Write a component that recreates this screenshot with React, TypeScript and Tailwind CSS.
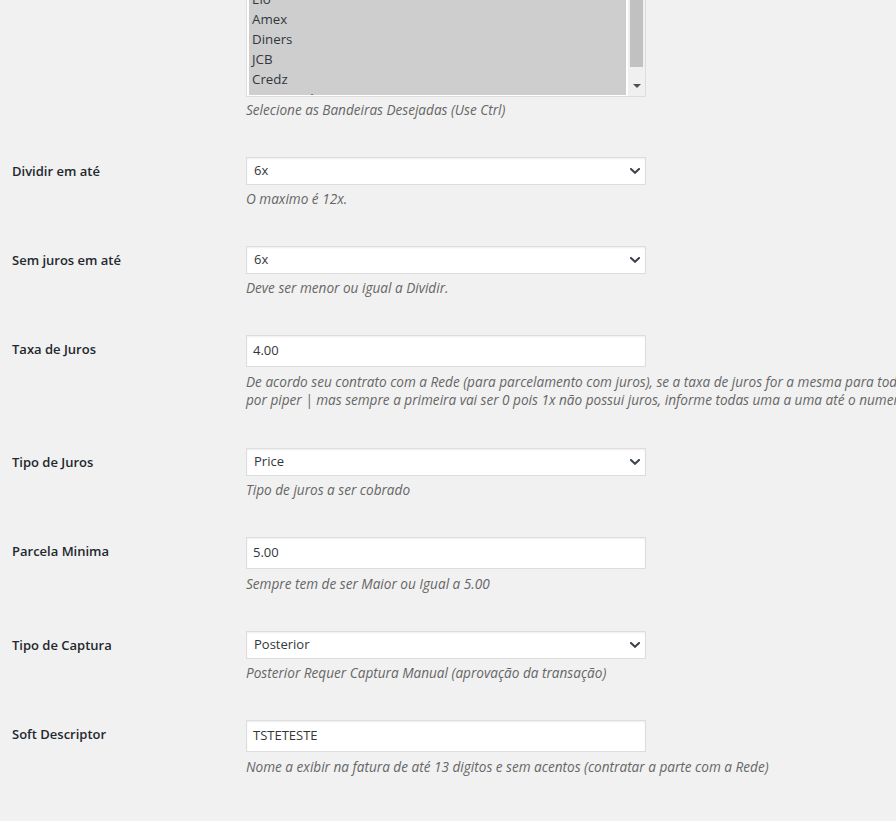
import React from "react";

const font = { fontFamily: "'Segoe UI', 'Open Sans', 'Noto Sans', sans-serif" };

function Chevron() {
  return (
    <svg viewBox="0 0 10 6" className="w-[10px] h-[6px] shrink-0" fill="none">
      <polyline
        points="1,1 5,4.8 9,1"
        stroke="#3c434a"
        strokeWidth="2"
        strokeLinecap="square"
      />
    </svg>
  );
}

function SelectBox({ value }: { value: string }) {
  return (
    <div className="w-[400px] h-[28px] flex items-center justify-between pl-[7px] pr-[5px] bg-white border border-[#dddddd] shadow-[inset_0_1px_2px_rgba(0,0,0,0.07)] text-[13px] text-[#32373c]">
      <span>{value}</span>
      <Chevron />
    </div>
  );
}

function TextBox({ value }: { value: string }) {
  return (
    <div className="w-[400px] h-[32px] flex items-center pl-[6px] bg-white border border-[#dddddd] shadow-[inset_0_1px_2px_rgba(0,0,0,0.07)] text-[13px] text-[#32373c]">
      {value}
    </div>
  );
}

function Desc({ children, gap }: { children: React.ReactNode; gap: string }) {
  return (
    <p className={`${gap} text-[13.6px] leading-[18px] italic text-[#666666] whitespace-nowrap`}>
      {children}
    </p>
  );
}

function Row({
  label,
  children,
  pb = "pb-[38px]",
}: {
  label: string;
  children: React.ReactNode;
  pb?: string;
}) {
  return (
    <div className={`flex ${pb}`}>
      <div className="w-[246px] shrink-0 pl-[12px] pt-[5px] text-[13px] leading-[18px] font-semibold text-[#23282d]">
        {label}
      </div>
      <div className="flex flex-col">{children}</div>
    </div>
  );
}

const bandeiras = ["Elo", "Amex", "Diners", "JCB", "Credz", "Hipercard"];

export default function App() {
  return (
    <div
      className="w-[896px] h-[821px] overflow-hidden bg-[#f1f1f1]"
      style={font}
    >
      {/* BANDEIRAS */}
      <div className="flex pb-[38px]">
        <div className="w-[246px] shrink-0" />
        <div className="flex flex-col">
          <div className="w-[400px] h-[97px] flex bg-white border-x border-b border-[#dddddd] pl-[2px] overflow-hidden">
            <div className="flex-1 h-[95px] overflow-hidden bg-[#cecece]">
              <div className="-mt-[11px]">
                {bandeiras.map((b) => (
                  <div
                    key={b}
                    className="h-[20px] leading-[20px] pl-[3px] text-[13.3px] text-[#32373c]"
                  >
                    {b}
                  </div>
                ))}
              </div>
            </div>
            <div className="w-[2px]" />
            <div className="w-[17px] h-[96px] bg-[#f0f0f0] flex flex-col items-center">
              <div className="w-[13px] h-[67px] bg-[#c1c1c1]" />
              <div className="flex-1 flex items-center justify-center pt-[8px]">
                <div className="w-0 h-0 border-l-[4px] border-r-[4px] border-t-[4px] border-l-transparent border-r-transparent border-t-[#505050]" />
              </div>
            </div>
          </div>
          <Desc gap="mt-[4px]">Selecione as Bandeiras Desejadas (Use Ctrl)</Desc>
        </div>
      </div>

      <Row label="Dividir em até">
        <SelectBox value="6x" />
        <Desc gap="mt-[5px]">O maximo é 12x.</Desc>
      </Row>

      <Row label="Sem juros em até">
        <SelectBox value="6x" />
        <Desc gap="mt-[5px]">Deve ser menor ou igual a Dividir.</Desc>
      </Row>

      <Row label="Taxa de Juros" pb="pb-[39px]">
        <TextBox value="4.00" />
        <Desc gap="mt-[6px]">
          De acordo seu contrato com a Rede (para parcelamento com juros), se a taxa de juros for a mesma para todas as parcelas informe apenas uma
        </Desc>
        <Desc gap="mt-0">
          por piper | mas sempre a primeira vai ser 0 pois 1x não possui juros, informe todas uma a uma até o numero de parcelas
        </Desc>
      </Row>

      <Row label="Tipo de Juros">
        <SelectBox value="Price" />
        <Desc gap="mt-[5px]">Tipo de juros a ser cobrado</Desc>
      </Row>

      <Row label="Parcela Minima">
        <TextBox value="5.00" />
        <Desc gap="mt-[6px]">Sempre tem de ser Maior ou Igual a 5.00</Desc>
      </Row>

      <Row label="Tipo de Captura">
        <SelectBox value="Posterior" />
        <Desc gap="mt-[5px]">Posterior Requer Captura Manual (aprovação da transação)</Desc>
      </Row>

      <Row label="Soft Descriptor">
        <TextBox value="TSTETESTE" />
        <Desc gap="mt-[6px]">
          Nome a exibir na fatura de até 13 digitos e sem acentos (contratar a parte com a Rede)
        </Desc>
      </Row>
    </div>
  );
}
